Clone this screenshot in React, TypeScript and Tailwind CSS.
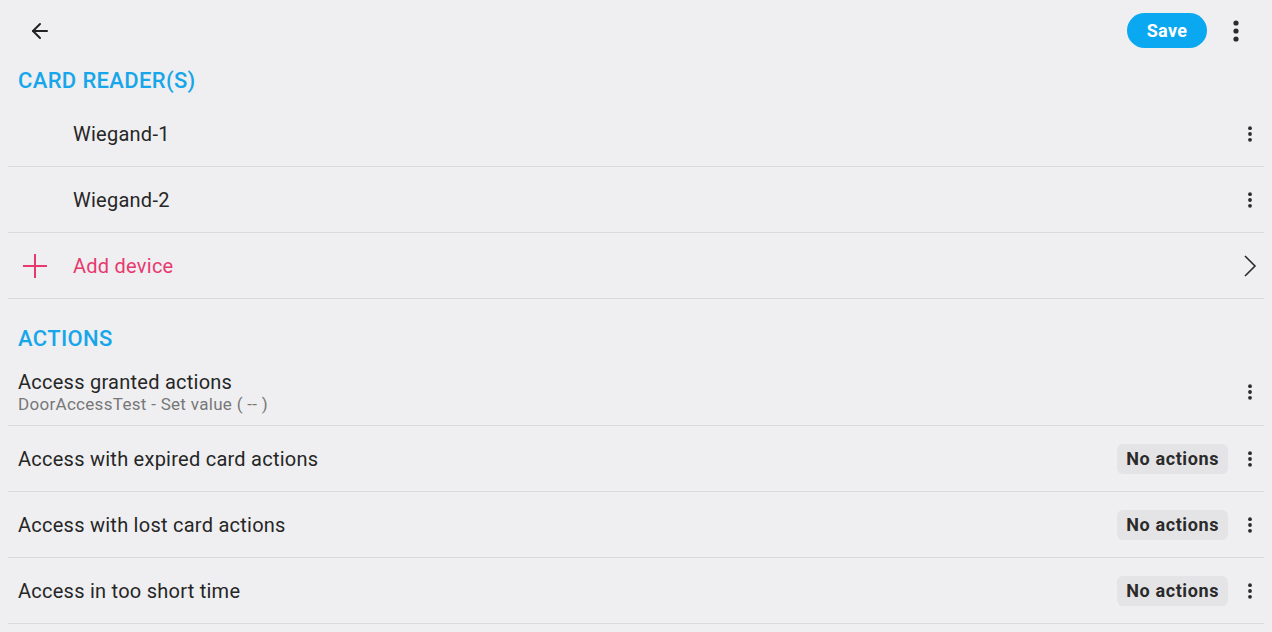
import { ArrowLeft } from "lucide-react";

const font = { fontFamily: "Roboto, 'Noto Sans', sans-serif" };

const Dots = ({ big = false }: { big?: boolean }) => (
  <svg width={big ? 8 : 6} height={big ? 22 : 16} viewBox={big ? "0 0 8 22" : "0 0 6 16"} className="text-[#2b2b2b]">
    {big ? (
      <>
        <circle cx="4" cy="3" r="2.6" fill="currentColor" />
        <circle cx="4" cy="11" r="2.6" fill="currentColor" />
        <circle cx="4" cy="19" r="2.6" fill="currentColor" />
      </>
    ) : (
      <>
        <circle cx="3" cy="2.2" r="1.9" fill="currentColor" />
        <circle cx="3" cy="8" r="1.9" fill="currentColor" />
        <circle cx="3" cy="13.8" r="1.9" fill="currentColor" />
      </>
    )}
  </svg>
);

const SectionTitle = ({ children, className = "" }: { children: string; className?: string }) => (
  <div className={`h-[40px] pb-[2px] flex items-center px-[18px] text-[22px] font-medium text-[#17a6ea] tracking-[0.35px] ${className}`}>
    {children}
  </div>
);

const DeviceRow = ({ name }: { name: string }) => (
  <div className="h-[66px] flex items-center border-b border-[#dadadc]">
    <span className="pl-[65px] flex-1 text-[20px] text-[#262626] tracking-[0.25px]">{name}</span>
    <span className="w-[28px] flex justify-center">
      <Dots />
    </span>
  </div>
);

const ActionRow = ({ title }: { title: string }) => (
  <div className="h-[66px] flex items-center border-b border-[#dadadc]">
    <span className="pl-[10px] flex-1 text-[20px] text-[#262626] tracking-[0.25px]">{title}</span>
    <span className="h-[30px] px-[9px] flex items-center rounded-[6px] bg-[#e4e4e6] text-[18px] font-bold text-[#2a2a2a] tracking-[0.6px]">
      No actions
    </span>
    <span className="w-[36px] flex justify-end pr-[11px]">
      <Dots />
    </span>
  </div>
);

export default function App() {
  return (
    <div className="w-[1272px] h-[632px] overflow-hidden bg-[#efeff1]" style={font}>
      <div className="h-[61px] flex items-center pl-[20px] pr-[32px]">
        <button className="w-[40px] h-[40px] flex items-center justify-center text-[#222]">
          <ArrowLeft size={24} strokeWidth={2} />
        </button>
        <div className="flex-1" />
        <button className="h-[35px] w-[80px] rounded-full bg-[#0aa8f0] text-white text-[18px] font-bold tracking-[0.3px]">
          Save
        </button>
        <span className="ml-[25px] flex items-center">
          <Dots big />
        </span>
      </div>

      <SectionTitle>CARD READER(S)</SectionTitle>

      <div className="px-[8px]">
        <DeviceRow name="Wiegand-1" />
        <DeviceRow name="Wiegand-2" />
        <div className="h-[66px] flex items-center border-b border-[#dadadc]">
          <span className="w-[65px] flex pl-[14px]">
            <svg width="26" height="26" viewBox="0 0 26 26">
              <path d="M13 1v24M1 13h24" stroke="#e8396f" strokeWidth="2" fill="none" />
            </svg>
          </span>
          <span className="flex-1 text-[20px] text-[#e8396f] tracking-[0.25px]">Add device</span>
          <span className="w-[28px] flex justify-center">
            <svg width="14" height="24" viewBox="0 0 14 24">
              <path d="M2 2l10 10-10 10" stroke="#2b2b2b" strokeWidth="1.6" fill="none" />
            </svg>
          </span>
        </div>
      </div>

      <SectionTitle className="mt-[20px]">ACTIONS</SectionTitle>

      <div className="px-[8px]">
        <div className="h-[67px] flex items-center border-b border-[#dadadc]">
          <div className="pl-[10px] flex-1 flex flex-col">
            <span className="text-[20px] leading-[24px] text-[#262626] tracking-[0.25px]">Access granted actions</span>
            <span className="text-[17px] leading-[20px] text-[#777] tracking-[0.3px]">DoorAccessTest - Set value ( -- )</span>
          </div>
          <span className="w-[28px] flex justify-center">
            <Dots />
          </span>
        </div>
        <ActionRow title="Access with expired card actions" />
        <ActionRow title="Access with lost card actions" />
        <ActionRow title="Access in too short time" />
      </div>
    </div>
  );
}
